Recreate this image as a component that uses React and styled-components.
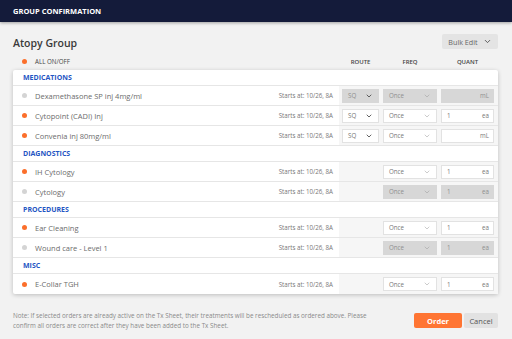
import React from 'react'
import styled, { createGlobalStyle } from 'styled-components'
import { ChevronDown } from 'lucide-react'

const GlobalStyle = createGlobalStyle`
  html, body {
    margin: 0;
    padding: 0;
    background: #f2f2f2;
    font-family: "Open Sans", "Noto Sans", Arial, sans-serif;
  }
  * { box-sizing: border-box; }
`

const sections = [
  {
    title: 'MEDICATIONS',
    items: [
      { name: 'Dexamethasone SP inj 4mg/ml', on: false, route: 'SQ', qty: '', unit: 'mL' },
      { name: 'Cytopoint (CADI) Inj', on: true, route: 'SQ', qty: '1', unit: 'ea' },
      { name: 'Convenia inj 80mg/ml', on: true, route: 'SQ', qty: '', unit: 'mL' },
    ],
  },
  {
    title: 'DIAGNOSTICS',
    items: [
      { name: 'IH Cytology', on: true, qty: '1', unit: 'ea' },
      { name: 'Cytology', on: false, qty: '1', unit: 'ea' },
    ],
  },
  {
    title: 'PROCEDURES',
    items: [
      { name: 'Ear Cleaning', on: true, qty: '1', unit: 'ea' },
      { name: 'Wound care - Level 1', on: false, qty: '1', unit: 'ea' },
    ],
  },
  {
    title: 'MISC',
    items: [{ name: 'E-Collar TGH', on: true, qty: '1', unit: 'ea' }],
  },
]

function App() {
  return (
    <Page>
      <GlobalStyle />
      <Header>GROUP CONFIRMATION</Header>
      <Body>
        <TitleRow>
          <Title>Atopy Group</Title>
          <BulkEdit>
            Bulk Edit <ChevronDown size={9} strokeWidth={2.5} />
          </BulkEdit>
        </TitleRow>
        <ColumnHead>
          <AllToggle>
            <Dot $on />
            ALL ON/OFF
          </AllToggle>
          <HeadCells>
            <HeadCell $w={37}>ROUTE</HeadCell>
            <HeadCell $w={54}>FREQ</HeadCell>
            <HeadCell $w={53}>QUANT</HeadCell>
          </HeadCells>
        </ColumnHead>
        <Card>
          {sections.map((s) => (
            <React.Fragment key={s.title}>
              <SectionRow>{s.title}</SectionRow>
              {s.items.map((it) => (
                <ItemRow key={it.name}>
                  <Name>
                    <Dot $on={it.on} />
                    {it.name}
                  </Name>
                  <Starts>Starts at: 10/26, 8A</Starts>
                  <Controls>
                    {it.route ? (
                      <Select $w={37} $disabled={!it.on} $dark>
                        {it.route}
                        <ChevronDown size={8} strokeWidth={2.5} />
                      </Select>
                    ) : (
                      <Spacer />
                    )}
                    <Select $w={54} $disabled={!it.on}>
                      Once
                      <ChevronDown size={8} strokeWidth={1.5} />
                    </Select>
                    <Quant $disabled={!it.on}>
                      <span>{it.qty}</span>
                      <span>{it.unit}</span>
                    </Quant>
                  </Controls>
                </ItemRow>
              ))}
            </React.Fragment>
          ))}
        </Card>
        <Footer>
          <Note>
            Note: If selected orders are already active on the Tx Sheet, their treatments will be
            rescheduled as ordered above. Please confirm all orders are correct after they have been
            added to the Tx Sheet.
          </Note>
          <Buttons>
            <OrderButton>Order</OrderButton>
            <CancelButton>Cancel</CancelButton>
          </Buttons>
        </Footer>
      </Body>
    </Page>
  )
}

const Page = styled.div`
  width: 512px;
  height: 339px;
  overflow: hidden;
  background: #f2f2f2;
`

const Header = styled.div`
  height: 22px;
  background: #141b3a;
  color: #fff;
  font-size: 7.5px;
  font-weight: 700;
  display: flex;
  align-items: center;
  padding-left: 13px;
  box-shadow: 0 1px 3px rgba(0, 0, 0, 0.35);
  position: relative;
`

const Body = styled.div`
  padding: 0 14px 0 13px;
`

const TitleRow = styled.div`
  display: flex;
  justify-content: space-between;
  align-items: center;
  height: 15px;
  margin-top: 12px;
`

const Title = styled.div`
  font-size: 10.5px;
  font-weight: 600;
  color: #3a3a3a;
  margin-top: 2px;
`

const BulkEdit = styled.div`
  width: 56px;
  height: 15px;
  background: #e4e4e4;
  border-radius: 2px;
  color: #666;
  font-size: 7.2px;
  display: flex;
  align-items: center;
  justify-content: center;
  gap: 5px;
  svg { color: #555; }
`

const ColumnHead = styled.div`
  display: flex;
  justify-content: space-between;
  align-items: flex-end;
  height: 21px;
  padding-bottom: 4px;
`

const AllToggle = styled.div`
  display: flex;
  align-items: center;
  font-size: 6.2px;
  font-weight: 500;
  color: #444;
  padding-left: 9px;
  gap: 8px;
`

const HeadCells = styled.div`
  display: flex;
  gap: 4px;
  padding: 0 4px 0 3px;
`

const HeadCell = styled.div`
  width: ${(p) => p.$w}px;
  text-align: center;
  font-size: 6px;
  font-weight: 600;
  color: #444;
`

const Card = styled.div`
  background: #fff;
  border-radius: 2px;
  box-shadow: 0 1px 4px rgba(0, 0, 0, 0.22);
`

const SectionRow = styled.div`
  height: 16px;
  display: flex;
  align-items: center;
  padding-left: 10px;
  font-size: 7px;
  font-weight: 700;
  color: #1f56c3;
  border-bottom: 1px solid #e6e6e6;
`

const ItemRow = styled.div`
  height: 20px;
  display: grid;
  grid-template-columns: 1fr auto 159px;
  align-items: stretch;
  border-bottom: 1px solid #e6e6e6;
  &:last-child { border-bottom: none; }
`

const Name = styled.div`
  display: flex;
  align-items: center;
  gap: 8px;
  padding-left: 9px;
  font-size: 7.5px;
  color: #6c6c6c;
`

const Dot = styled.span`
  width: 5px;
  height: 5px;
  border-radius: 50%;
  background: ${(p) => (p.$on ? '#fb6f2b' : '#d4d4d4')};
  flex-shrink: 0;
`

const Starts = styled.div`
  display: flex;
  align-items: center;
  padding-right: 6px;
  font-size: 6.2px;
  color: #777;
`

const Controls = styled.div`
  background: #f6f6f6;
  display: flex;
  align-items: center;
  gap: 4px;
  padding: 0 4px 0 3px;
`

const Spacer = styled.div`
  width: 37px;
`

const Select = styled.div`
  width: ${(p) => p.$w}px;
  height: 14px;
  display: flex;
  align-items: center;
  justify-content: space-between;
  padding: 0 5px 0 5px;
  font-size: 6.2px;
  border: 1px solid ${(p) => (p.$disabled ? '#d7d7d7' : '#e2e2e2')};
  background: ${(p) => (p.$disabled ? '#d7d7d7' : '#fff')};
  color: ${(p) => (p.$disabled ? '#8f8f8f' : '#777')};
  svg { color: ${(p) => (p.$dark ? '#444' : '#999')}; }
`

const Quant = styled.div`
  width: 53px;
  height: 14px;
  display: flex;
  align-items: center;
  justify-content: space-between;
  padding: 0 4px 0 5px;
  font-size: 6.2px;
  border: 1px solid ${(p) => (p.$disabled ? '#d7d7d7' : '#e2e2e2')};
  background: ${(p) => (p.$disabled ? '#d7d7d7' : '#fff')};
  color: ${(p) => (p.$disabled ? '#8f8f8f' : '#777')};
`

const Footer = styled.div`
  display: flex;
  justify-content: space-between;
  align-items: flex-start;
  margin-top: 17px;
`

const Note = styled.div`
  width: 370px;
  font-size: 6.3px;
  line-height: 10px;
  color: #8a8a8a;
`

const Buttons = styled.div`
  display: flex;
  gap: 2px;
  margin-top: 2px;
`

const OrderButton = styled.div`
  width: 48px;
  height: 15px;
  background: #ff7533;
  border-radius: 2px;
  color: #fff;
  font-size: 7.5px;
  font-weight: 700;
  display: flex;
  align-items: center;
  justify-content: center;
`

const CancelButton = styled.div`
  width: 34px;
  height: 15px;
  background: #e2e2e2;
  border-radius: 2px;
  color: #555;
  font-size: 7.5px;
  display: flex;
  align-items: center;
  justify-content: center;
`

export default App
